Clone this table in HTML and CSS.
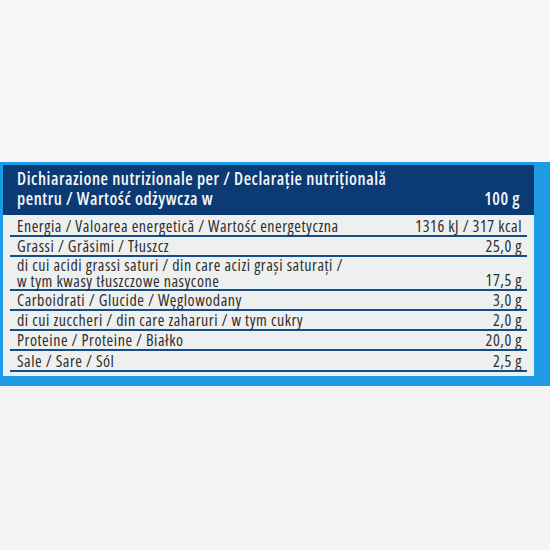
FILE: index.html
```html
<!DOCTYPE html>
<html lang="en">
<head>
  <meta charset="UTF-8">
  <meta name="viewport" content="width=device-width, initial-scale=1.0">
  <title>Dichiarazione nutrizionale</title>
  <link rel="stylesheet" href="styles.css">
</head>
<body>

  <div class="page">
    <div class="top-space"></div>

    <div class="panel">
      <!-- Header of the label -->
      <div class="label-head">
        <div class="head-title">Dichiarazione nutrizionale per / Declarație nutrițională</div>
        <div class="head-row">
          <span>pentru / Wartość odżywcza w</span>
          <span class="head-unit">100 g</span>
        </div>
      </div>

      <!-- Nutrition rows -->
      <div class="label-table">
        <div class="row first">
          <span class="name">Energia / Valoarea energetică / Wartość energetyczna</span>
          <span class="value">1316 kJ / 317 kcal</span>
        </div>
        <div class="row">
          <span class="name">Grassi / Grăsimi / Tłuszcz</span>
          <span class="value">25,0 g</span>
        </div>
        <div class="row double">
          <span class="name">di cui acidi grassi saturi / din care acizi grași saturați /<br>w tym kwasy tłuszczowe nasycone</span>
          <span class="value">17,5 g</span>
        </div>
        <div class="row">
          <span class="name">Carboidrati / Glucide / Węglowodany</span>
          <span class="value">3,0 g</span>
        </div>
        <div class="row">
          <span class="name">di cui zuccheri / din care zaharuri / w tym cukry</span>
          <span class="value">2,0 g</span>
        </div>
        <div class="row">
          <span class="name">Proteine / Proteine / Białko</span>
          <span class="value">20,0 g</span>
        </div>
        <div class="row last">
          <span class="name">Sale / Sare / Sól</span>
          <span class="value">2,5 g</span>
        </div>
      </div>
    </div>
  </div>

</body>
</html>
```

FILE: styles.css
```css
* {
  box-sizing: border-box;
  margin: 0;
  padding: 0;
}
body {
  font-family: 'Open Sans', 'Liberation Sans', sans-serif;
  font-stretch: 75%;
  letter-spacing: 0.55px;
  background-color: #f4f4f4;
  color: #2e2e2e;
}
.page {
  width: 550px;
  height: 550px;
}
.top-space {
  height: 162px;
  background-color: #f7f7f7;
}

/* Blue band around the label */
.panel {
  background-color: #1d9be4;
  padding: 3px 16px 10px 3px;
}

/* Navy header */
.label-head {
  background-color: #0b3a74;
  color: #f4f6fa;
  font-size: 17px;
  font-weight: 600;
  line-height: 20px;
  padding: 4px 14px 6px 14px;
}
.head-row {
  display: flex;
  justify-content: space-between;
}

/* Table */
.label-table {
  background-color: #eef0ef;
  padding: 0 7px 4px 7px;
  font-size: 16px;
  line-height: 17px;
}
.row {
  display: flex;
  justify-content: space-between;
  align-items: flex-end;
  padding: 1px 5px 0 7px;
  border-bottom: 2px solid #154d88;
}
.row.first {
  padding-top: 3px;
}
.row.double {
  line-height: 16px;
  padding-top: 0;
}
.row.double .value {
  line-height: 17px;
}
.row.last {
  padding-top: 2px;
}
.value {
  white-space: nowrap;
}
```
